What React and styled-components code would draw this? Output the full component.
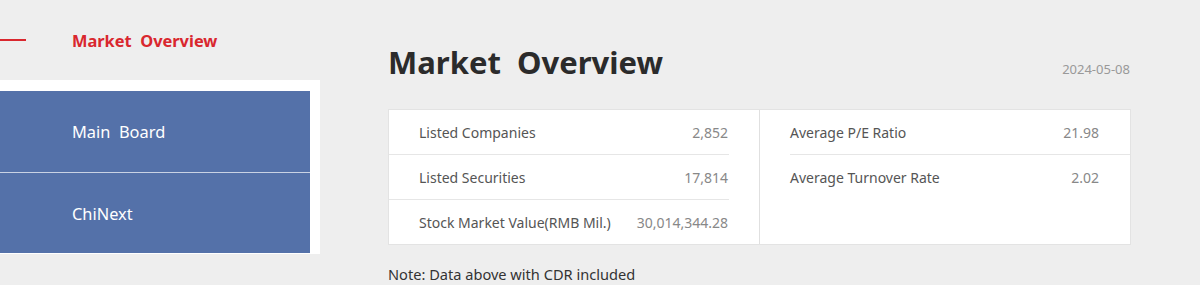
import React from "react";
import styled, { createGlobalStyle } from "styled-components";

const Global = createGlobalStyle`
  html, body { margin: 0; padding: 0; background: #eeeeee; }
  body { font-family: "Noto Sans", "Open Sans", sans-serif; }
  * { box-sizing: border-box; }
`;

const Page = styled.div`
  display: flex;
  width: 1200px;
  height: 285px;
  overflow: hidden;
`;

const Sidebar = styled.aside`
  width: 320px;
  flex-shrink: 0;
  display: flex;
  flex-direction: column;
`;

const SideHeader = styled.div`
  height: 80px;
  display: flex;
  align-items: center;
  color: #d9272e;
  font-weight: 700;
  font-size: 16.4px;
  &::before {
    content: "";
    width: 26px;
    height: 2px;
    background: #d9272e;
    margin-right: 46px;
  }
`;

const SidePanel = styled.nav`
  background: #ffffff;
  padding: 11px 10px 1px 0;
`;

const NavItem = styled.div`
  height: ${(p) => (p.$first ? "82px" : "80px")};
  background: #5471a9;
  color: #ffffff;
  font-size: 16.4px;
  display: flex;
  align-items: center;
  padding-left: 72px;
  border-bottom: ${(p) => (p.$first ? "1px solid #c9d2e4" : "none")};
`;

const Main = styled.main`
  margin-left: 68px;
  width: 743px;
  display: flex;
  flex-direction: column;
`;

const Header = styled.div`
  display: flex;
  justify-content: space-between;
  align-items: baseline;
  padding-top: 40px;
`;

const Title = styled.h1`
  margin: 0;
  font-size: 31px;
  line-height: 44px;
  font-weight: 700;
  color: #2b2b2b;
`;

const DateText = styled.span`
  font-size: 13px;
  color: #999999;
  padding-right: 1px;
`;

const Table = styled.div`
  margin-top: 25px;
  background: #ffffff;
  border: 1px solid #e3e3e3;
  display: flex;
`;

const Column = styled.div`
  flex: 1;
  display: flex;
  flex-direction: column;
  padding: ${(p) => (p.$right ? "0 0 0 30px" : "0 30px 0 0")};
  border-left: ${(p) => (p.$right ? "1px solid #e0e0e0" : "none")};
`;

const Row = styled.div`
  height: ${(p) => (p.$last ? "44px" : "45px")};
  display: flex;
  justify-content: space-between;
  align-items: center;
  padding: ${(p) => (p.$right ? "0 31px 0 0" : "0 0 0 30px")};
  border-bottom: ${(p) => (p.$last ? "none" : "1px solid #e6e6e6")};
  font-size: 14px;
`;

const Label = styled.span`
  color: #555555;
`;

const Value = styled.span`
  color: #888888;
  padding-right: ${(p) => (p.$right ? "0" : "1px")};
`;

const Note = styled.p`
  margin: 19px 0 0;
  font-size: 14.6px;
  line-height: 20px;
  color: #333333;
`;

const left = [
  ["Listed Companies", "2,852"],
  ["Listed Securities", "17,814"],
  ["Stock Market Value(RMB Mil.)", "30,014,344.28"],
];
const right = [
  ["Average P/E Ratio", "21.98"],
  ["Average Turnover Rate", "2.02"],
];

export default function App() {
  return (
    <>
      <Global />
      <Page>
        <Sidebar>
          <SideHeader>Market&nbsp; Overview</SideHeader>
          <SidePanel>
            <NavItem $first>Main&nbsp; Board</NavItem>
            <NavItem>ChiNext</NavItem>
          </SidePanel>
        </Sidebar>
        <Main>
          <Header>
            <Title>Market&nbsp; Overview</Title>
            <DateText>2024-05-08</DateText>
          </Header>
          <Table>
            <Column>
              {left.map(([l, v], i) => (
                <Row key={l} $last={i === left.length - 1}>
                  <Label>{l}</Label>
                  <Value>{v}</Value>
                </Row>
              ))}
            </Column>
            <Column $right>
              {right.map(([l, v], i) => (
                <Row key={l} $right $last={i === right.length - 1}>
                  <Label>{l}</Label>
                  <Value $right>{v}</Value>
                </Row>
              ))}
            </Column>
          </Table>
          <Note>Note: Data above with CDR included</Note>
        </Main>
      </Page>
    </>
  );
}
